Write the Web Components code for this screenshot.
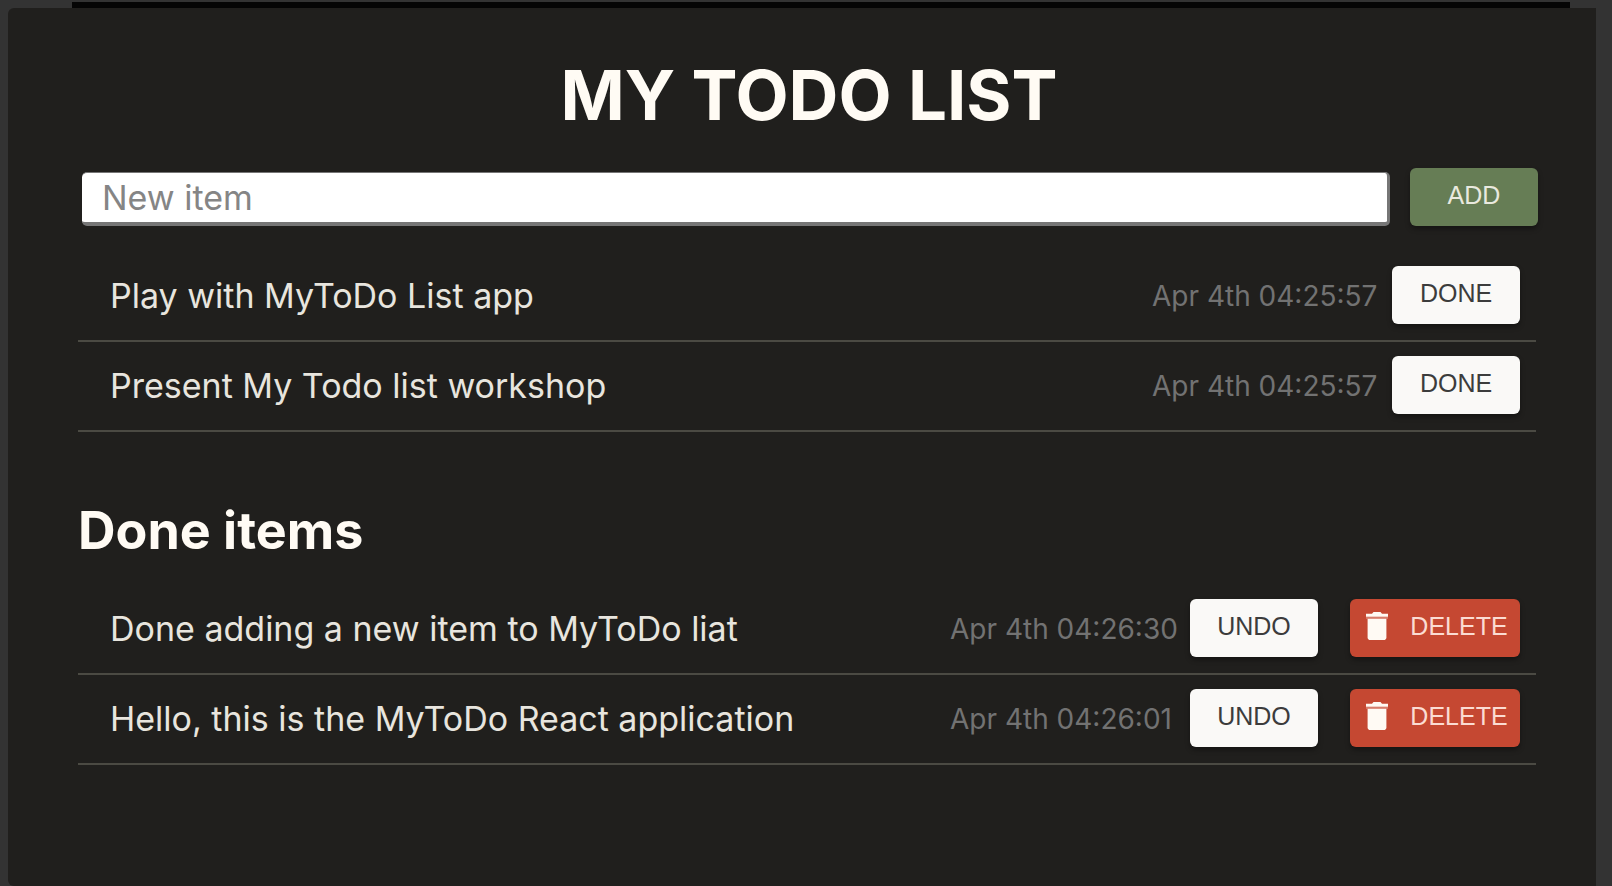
<!DOCTYPE html>
<html lang="en">
<head>
<meta charset="utf-8">
<meta name="viewport" content="width=device-width, initial-scale=1">
<title>My Todo List</title>
<style>
  html { background: #333; }
  body { margin: 0; font-family: Inter, "Liberation Sans", sans-serif; color: #fffbf4; }
</style>
</head>
<body>
<todo-app>
  <todo-form></todo-form>
  <todo-list>
    <todo-item date="Apr 4th 04:25:57">Play with MyToDo List app</todo-item>
    <todo-item date="Apr 4th 04:25:57">Present My Todo list workshop</todo-item>
  </todo-list>
  <todo-list heading="Done items">
    <todo-item done date="Apr 4th 04:26:30">Done adding a new item to MyToDo liat</todo-item>
    <todo-item done date="Apr 4th 04:26:01">Hello, this is the MyToDo React application</todo-item>
  </todo-list>
</todo-app>

<script>
const attach = (el, html) => { el.attachShadow({ mode: 'open' }).innerHTML = html; };

customElements.define('todo-app', class extends HTMLElement {
  constructor() {
    super();
    attach(this, `
      <style>
        :host { display: flex; flex-direction: column; min-height: 100vh; box-sizing: border-box; }
        .strip { height: 6px; margin: 2px 42px 0 72px; background: #050505; }
        main {
          flex: 1; box-sizing: border-box; margin: 0 16px 0 8px; padding: 44px 60px 48px 70px;
          background: #201f1d; border-radius: 6px 0 0 6px;
        }
        h1 { margin: 0 0 30px 4px; font-size: 69px; line-height: 86px; font-weight: 700; text-align: center; }
      </style>
      <div class="strip"></div>
      <main>
        <h1>MY TODO LIST</h1>
        <slot></slot>
      </main>`);
  }
});

customElements.define('todo-button', class extends HTMLElement {
  constructor() {
    super();
    const icon = this.hasAttribute('trash') ? `
      <svg width="22" height="28" viewBox="0 0 22 28" aria-hidden="true">
        <path d="M0 1.8h6L7.500 0h7L16 1.800h6v3H0z" fill="currentColor"/>
        <path d="M0 4.800h22v2H0z" fill="currentColor" opacity=".3"/>
        <path d="M1.600 6.800h18.800v18.400a2.800 2.800 0 0 1-2.800 2.800H4.400a2.800 2.800 0 0 1-2.800-2.800z" fill="currentColor"/>
      </svg>` : '';
    attach(this, `
      <style>
        :host { display: block; flex: none; }
        button {
          display: flex; align-items: center; justify-content: center; box-sizing: border-box;
          min-width: 128px; height: 58px; padding: 0 14px 4px; border: 0; border-radius: 6px;
          font: 25px/30px "Liberation Sans", Arial, sans-serif; color: #3c3c3c; background: #faf9f7;
          box-shadow: 0 3px 5px rgba(0, 0, 0, .35); cursor: pointer;
        }
        svg { color: #fffaf4; margin-right: 22px; }
        :host([kind=add]) button { color: #e9e9df; background: #667d55; }
        :host([kind=delete]) button { color: #fbdcd3; background: #c54832; width: 170px; padding: 0 12px 4px 16px; }
      </style>
      <button type="button">${icon}<slot></slot></button>`);
  }
});

customElements.define('todo-form', class extends HTMLElement {
  constructor() {
    super();
    attach(this, `
      <style>
        :host { display: block; margin: 0 -2px 26px 4px; }
        form { display: flex; align-items: flex-end; gap: 20px; }
        input {
          flex: 1; min-width: 0; height: 54px; box-sizing: border-box; padding: 0 20px; margin: 0;
          border: solid #767676; border-width: 1px 3px 4px 0; border-radius: 5px;
          background: #fff; color: #222; font: 34px/44px Inter, sans-serif; outline: 0;
        }
        input::placeholder { color: #858585; opacity: 1; }
      </style>
      <form>
        <input type="text" placeholder="New item" aria-label="New item">
        <todo-button kind="add">ADD</todo-button>
      </form>`);
  }
});

customElements.define('todo-list', class extends HTMLElement {
  constructor() {
    super();
    const heading = this.getAttribute('heading');
    attach(this, `
      <style>
        :host { display: block; }
        h2 { margin: 69px 0 24px; font-size: 52px; line-height: 60px; font-weight: 700; }
      </style>
      ${heading ? `<h2>${heading}</h2>` : ''}
      <div role="list"><slot></slot></div>`);
  }
});

customElements.define('todo-item', class extends HTMLElement {
  constructor() {
    super();
    this.setAttribute('role', 'listitem');
    const actions = this.hasAttribute('done')
      ? '<todo-button>UNDO</todo-button><todo-button kind="delete" trash>DELETE</todo-button>'
      : '<todo-button>DONE</todo-button>';
    attach(this, `
      <style>
        :host {
          display: flex; align-items: center; padding: 14px 16px 16px 32px;
          border-bottom: 2px solid #4b4a43; color: #e8e5de;
        }
        .text, time { padding-top: 2px; }
        .text { flex: 1; min-width: 0; font-size: 34px; line-height: 44px; }
        time { width: 224px; margin-right: 16px; font-size: 28px; line-height: 36px; white-space: nowrap; color: #727272; }
        .actions { display: flex; gap: 32px; }
      </style>
      <span class="text"><slot></slot></span>
      <time>${this.getAttribute('date')}</time>
      <div class="actions">${actions}</div>`);
  }
});
</script>
</body>
</html>
